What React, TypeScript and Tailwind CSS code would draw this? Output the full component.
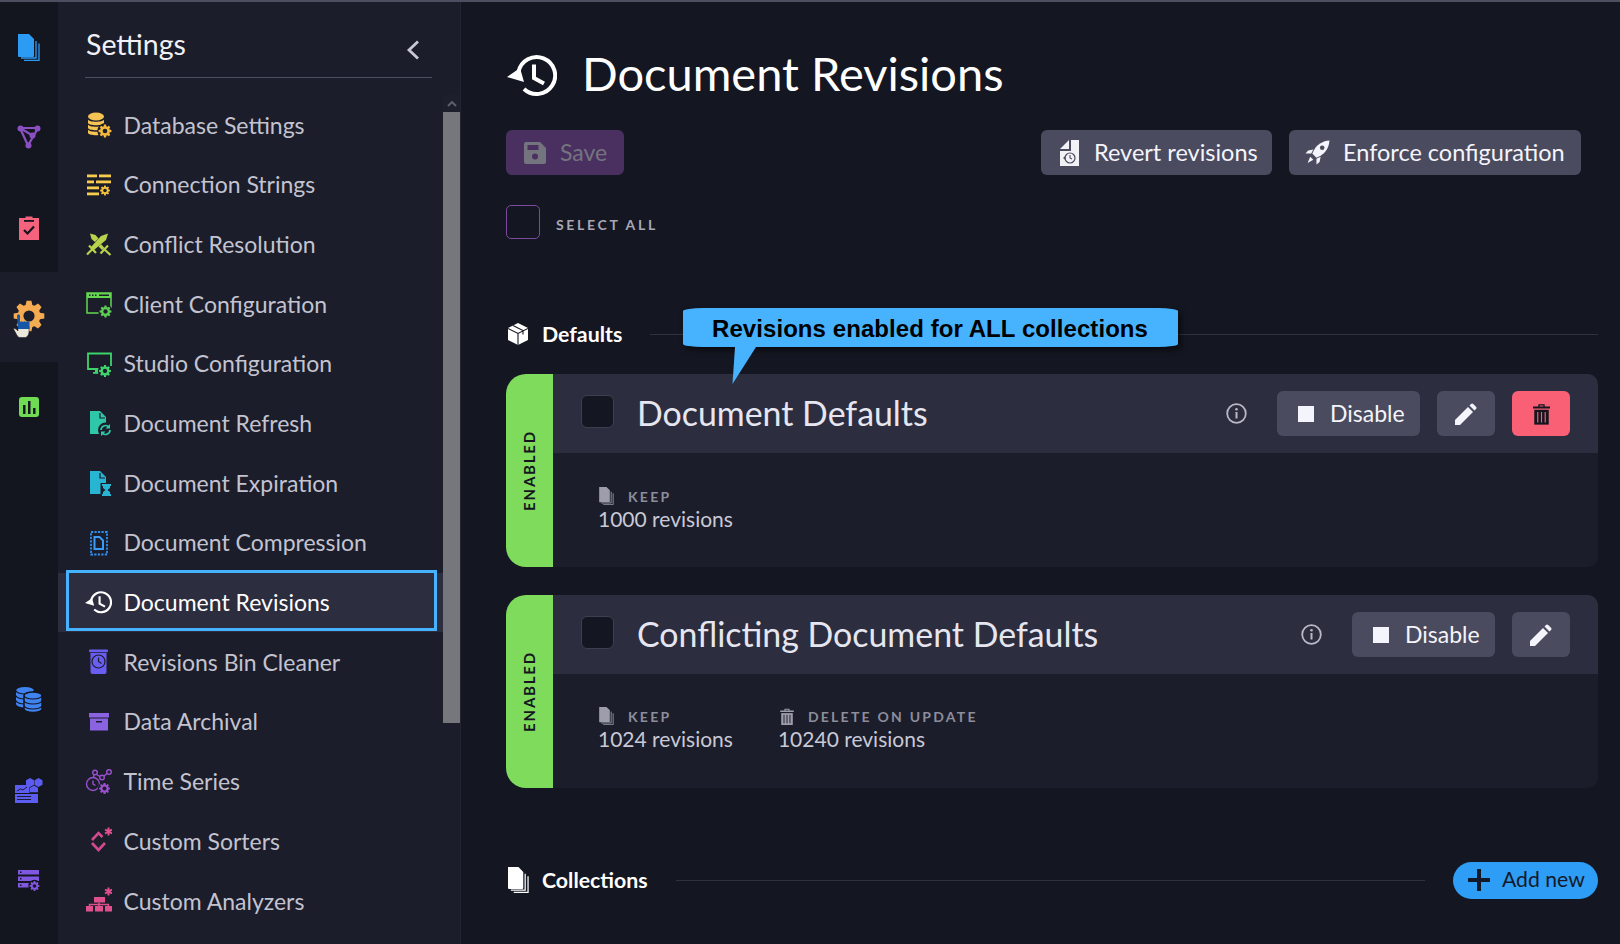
const BG = '#1b1d2a'

// gear outline as a polygon, teeth all round
function Gear({ cx, cy, r, fill, hole = BG, teeth = 8 }: { cx: number; cy: number; r: number; fill: string; hole?: string; teeth?: number }) {
  const pts: string[] = []
  const inner = r * 0.74
  for (let i = 0; i < teeth; i++) {
    const a = (i / teeth) * Math.PI * 2
    const w = (Math.PI * 2) / teeth
    const add = (rad: number, ang: number) => pts.push(`${(cx + rad * Math.cos(ang)).toFixed(2)},${(cy + rad * Math.sin(ang)).toFixed(2)}`)
    add(inner, a - w * 0.38)
    add(r, a - w * 0.2)
    add(r, a + w * 0.2)
    add(inner, a + w * 0.38)
  }
  return (
    <g>
      <circle cx={cx} cy={cy} r={r + 1.2} fill={hole} />
      <polygon points={pts.join(' ')} fill={fill} />
      <circle cx={cx} cy={cy} r={r * 0.36} fill={hole} />
    </g>
  )
}

const Svg = ({ children, w = 28, h = 28 }: { children: React.ReactNode; w?: number; h?: number }) => (
  <svg width={w} height={h} viewBox={`0 0 ${w} ${h}`} className="shrink-0">
    {children}
  </svg>
)

const DocBody = ({ fill }: { fill: string }) => (
  <>
    <path d="M6 2h10l6 6v17H6z" fill={fill} />
    <path d="M16 4v5h5" fill="none" stroke={BG} strokeWidth="1.200" />
  </>
)

// clock with a back arrow, used in the menu and the page title
const HistoryIcon = ({ w, h }: { w: number; h: number }) => (
  <svg width={w} height={h} viewBox="0 0 50 44" className="shrink-0">
    <path d="M11.500 19A18.500 18.500 0 1 1 17 36" fill="none" stroke="#fff" strokeWidth="4" />
    <path d="M0 24l13-9 4 14z" fill="#fff" />
    <path d="M27 11.500V25l10 5.500" fill="none" stroke="#fff" strokeWidth="4" />
  </svg>
)

const menuIcons: Record<string, React.ReactNode> = {
  db: (
    <Svg>
      <ellipse cx="12" cy="5.500" rx="8" ry="4" fill="#f6c453" />
      <path d="M4 8.500c1 3 15 3 16 0v3.500c-1 3-15 3-16 0z" fill="#f6c453" />
      <path d="M4 13.500c1 3 15 3 16 0V17c-1 3-15 3-16 0z" fill="#f6c453" />
      <path d="M4 18.500c1 3 15 3 16 0V22c-1 3-15 3-16 0z" fill="#f6c453" />
      <Gear cx={21} cy={20} r={6.500} fill="#f5b63c" />
    </Svg>
  ),
  conn: (
    <Svg>
      <g fill="#f7cb4b">
        <rect x="3" y="3.500" width="10" height="2.800" />
        <rect x="15" y="3.500" width="12" height="2.800" />
        <rect x="3" y="9.500" width="7" height="2.800" />
        <rect x="12" y="9.500" width="15" height="2.800" />
        <rect x="3" y="15.500" width="12" height="2.800" />
        <rect x="3" y="21.500" width="12" height="2.800" />
      </g>
      <Gear cx={21} cy={19.500} r={5} fill="#f5c03c" />
    </Svg>
  ),
  swords: (
    <Svg>
      <g fill="#b7d34c">
        <path d="M24 3.500l-2 6.500-12 10-3-3 10-11z" />
        <path d="M6 3.500l5.500 1.500 3 3.500-3.500 3.500-3.500-3z" />
        <path d="M17 14l3.500 4-2.500 2-3.500-3.500z" />
      </g>
      <g stroke="#b7d34c" strokeWidth="2.200" fill="none">
        <path d="M8 19.500L3 24.500M5 15.500l7 7.500" />
        <path d="M20 19l6.500 6M24 15.500l-7.500 8" />
      </g>
    </Svg>
  ),
  client: (
    <Svg>
      <rect x="3" y="3" width="24" height="20" fill="none" stroke="#63d84e" strokeWidth="1.500" />
      <rect x="3" y="3" width="24" height="5" fill="#63d84e" />
      <rect x="5" y="4.500" width="1.500" height="1.500" fill={BG} />
      <rect x="8" y="4.500" width="1.500" height="1.500" fill={BG} />
      <rect x="11" y="4.500" width="1.500" height="1.500" fill={BG} />
      <rect x="15" y="4.500" width="10" height="1.500" fill={BG} />
      <Gear cx={21.500} cy={21.500} r={6} fill="#5ecb55" />
    </Svg>
  ),
  studio: (
    <Svg>
      <path d="M18 19H4V3.500h23V16" fill="none" stroke="#3fd46b" strokeWidth="1.800" />
      <rect x="11" y="19" width="3" height="4" fill="#3fd46b" />
      <rect x="9" y="22" width="7" height="1.800" fill="#3fd46b" />
      <Gear cx={21} cy={21} r={6} fill="#3fd46b" />
    </Svg>
  ),
  refresh: (
    <Svg>
      <DocBody fill="#2fc7a7" />
      <circle cx="21.500" cy="21" r="7.500" fill={BG} />
      <path d="M17 21a4.500 4.500 0 0 1 7.500-3.300M26 21a4.500 4.500 0 0 1-7.500 3.300" fill="none" stroke="#2fc7a7" strokeWidth="1.700" />
      <path d="M26 15v4.500h-4.500zM17 27v-4.500h4.500z" fill="#2fc7a7" />
    </Svg>
  ),
  expire: (
    <Svg>
      <DocBody fill="#28b5d4" />
      <rect x="16.500" y="14" width="12" height="14" fill={BG} />
      <path d="M18 15h9v2h-1v2l-2.500 2 2.500 2v2h1v2h-9v-2h1v-2l2.500-2-2.500-2v-2h-1z" fill="#28b5d4" />
    </Svg>
  ),
  compress: (
    <Svg>
      <rect x="7" y="3" width="16" height="22.500" fill="none" stroke="#2f8ff0" strokeWidth="1.800" strokeDasharray="2.200 1.300" />
      <path d="M10.500 8h5l3.500 3.500V20h-8.500z" fill="none" stroke="#3a9bf5" strokeWidth="2" />
    </Svg>
  ),
  bin: (
    <Svg>
      <rect x="5" y="1.500" width="19" height="2.800" rx="1" fill="#6a5ef0" />
      <path d="M6.500 5h16v19a2 2 0 0 1-2 2h-12a2 2 0 0 1-2-2z" fill="#6a5ef0" />
      <circle cx="14.500" cy="13.500" r="6.500" fill="none" stroke={BG} strokeWidth="1.200" />
      <path d="M14.500 9.500v4l3 2" fill="none" stroke={BG} strokeWidth="1.200" />
    </Svg>
  ),
  archive: (
    <Svg>
      <rect x="5" y="5" width="20" height="4.500" fill="#8a63e0" />
      <rect x="6" y="10.500" width="18" height="12" fill="#8a63e0" />
      <rect x="12" y="13" width="6" height="1.500" fill={BG} />
    </Svg>
  ),
  series: (
    <Svg>
      <g fill="none" stroke="#9a4fcf" strokeWidth="1.400">
        <circle cx="9" cy="17" r="6.500" />
        <path d="M9 13.500V17l2.500 1.500" />
        <circle cx="11" cy="5.500" r="2.300" />
        <circle cx="18" cy="10.500" r="2.300" />
        <circle cx="25" cy="5" r="2.300" />
        <path d="M12.500 7.500l3.500 2M20 9l3-2.500M10 8l-.5 2.500" />
      </g>
      <Gear cx={20.500} cy={21.500} r={5.500} fill="#9a4fcf" />
    </Svg>
  ),
  sorters: (
    <Svg>
      <path d="M8 13l6.500-7 4 4" fill="none" stroke="#d14a8e" strokeWidth="2.600" />
      <path d="M8 16l6.500 7 6.500-7" fill="none" stroke="#d14a8e" strokeWidth="2.600" />
      <path d="M24.500 .5v8M21 2.500l7 4M28 2.500l-7 4" stroke="#e0508f" strokeWidth="2" />
    </Svg>
  ),
  analyzers: (
    <Svg>
      <path d="M24.500 .5v8M21 2.500l7 4M28 2.500l-7 4" stroke="#e0508f" strokeWidth="2" />
      <rect x="10" y="10" width="11" height="5.500" fill="#e0508f" />
      <path d="M15 15.500v4M5.500 19v-1.500h19V19" fill="none" stroke="#e0508f" strokeWidth="1.400" />
      <rect x="2" y="19" width="7" height="5.500" fill="#e0508f" />
      <rect x="11" y="19" width="8" height="5.500" fill="#e0508f" />
      <rect x="21" y="19" width="7" height="5.500" fill="#e0508f" />
    </Svg>
  ),
}

const menu: [string, React.ReactNode][] = [
  ['Database Settings', menuIcons.db],
  ['Connection Strings', menuIcons.conn],
  ['Conflict Resolution', menuIcons.swords],
  ['Client Configuration', menuIcons.client],
  ['Studio Configuration', menuIcons.studio],
  ['Document Refresh', menuIcons.refresh],
  ['Document Expiration', menuIcons.expire],
  ['Document Compression', menuIcons.compress],
  ['Document Revisions', <span key="h" className="w-[28px] flex justify-center"><HistoryIcon w={27} h={24} /></span>],
  ['Revisions Bin Cleaner', menuIcons.bin],
  ['Data Archival', menuIcons.archive],
  ['Time Series', menuIcons.series],
  ['Custom Sorters', menuIcons.sorters],
  ['Custom Analyzers', menuIcons.analyzers],
]

const PagesIcon = ({ fill, w, h }: { fill: string; w: number; h: number }) => (
  <svg width={w} height={h} viewBox="0 0 22 27" className="shrink-0">
    <path d="M0 0h11l5 5v17a1 1 0 0 1-1 1H1a1 1 0 0 1-1-1z" fill={fill} />
    <path d="M18 7v17H3M21 9.500V26.500H6" fill="none" stroke={fill} strokeWidth="1.300" />
  </svg>
)

function RailDocs() {
  return <PagesIcon fill="#2b9bf4" w={22} h={27} />
}

function RailGraph() {
  return (
    <Svg w={24} h={24}>
      <g fill="none" stroke="#8a4fc0" strokeWidth="2.200">
        <path d="M3 3h18L11 20.500z" />
        <path d="M3 3l12.500 7.500" />
      </g>
      <g fill="#8a4fc0">
        <circle cx="3.500" cy="3.500" r="3" />
        <circle cx="20.500" cy="3.500" r="3" />
        <circle cx="11.500" cy="20.500" r="3" />
        <circle cx="15.500" cy="10.500" r="3" />
      </g>
    </Svg>
  )
}

function RailTasks() {
  return (
    <Svg w={20} h={25}>
      <path d="M0 3h6.500V1.500h7V3H20v22H0z" fill="#f5627e" />
      <rect x="5" y="5" width="10" height="1.800" fill="#14151f" />
      <path d="M5 15l3.500 3.500L15 11.500" fill="none" stroke="#14151f" strokeWidth="2.200" />
    </Svg>
  )
}

function RailSettings() {
  return (
    <div className="relative w-[32px] h-[34px] -mt-[2px]">
      <Svg w={32} h={34}>
        <Gear cx={16} cy={17} r={15.500} fill="#f5ab52" hole="#1b1d2a" />
      </Svg>
      {/* mouse pointer sitting on the gear */}
      <svg width="18" height="24" viewBox="0 0 18 24" className="absolute left-0 top-[15px]">
        <path d="M.5 15c1-1 3 0 4.500 2V13h11v4c0 4-2 6.500-4 6.500H7c-2 0-3-2-4-4z" fill="#ece8dc" stroke="#14151f" strokeWidth=".5" />
        <path d="M4 1.500c0-1.500 3-1.500 3 0V8c1-1 2-1 3 0 1-1 2-1 3 0 1-1 3-1 3.500.5V15H5z" fill="#1456a8" />
      </svg>
    </div>
  )
}

function RailStats() {
  return (
    <Svg w={20} h={20}>
      <rect width="20" height="20" rx="3" fill="#6fdc54" />
      <rect x="4" y="8" width="2.500" height="9" fill="#14151f" />
      <rect x="9" y="4" width="2.500" height="13" fill="#14151f" />
      <rect x="14" y="11" width="2.500" height="6" fill="#14151f" />
    </Svg>
  )
}

function RailDatabases() {
  const can = (x: number, y: number, halo: boolean) => (
    <g transform={`translate(${x} ${y})`}>
      <path d="M0 3.500a9 3.500 0 0 1 18 0V17a9 3.500 0 0 1-18 0z" fill="#3f83f0" stroke={halo ? '#14151f' : 'none'} strokeWidth="1.500" />
      <path d="M0 3.500a9 3.500 0 0 0 18 0M0 8.500a9 3.500 0 0 0 18 0M0 13.500a9 3.500 0 0 0 18 0" fill="none" stroke="#14151f" strokeWidth="1.100" />
    </g>
  )
  return (
    <Svg w={28} h={28}>
      {can(1, 1, false)}
      {can(9, 6, true)}
    </Svg>
  )
}

function RailStorage() {
  return (
    <Svg w={28} h={25}>
      <path d="M15 0l4 2.300v4.500l-4 2.300-4-2.300V2.300z" fill="#5c5cf0" />
      <path d="M23.500 0l4 2.300v4.500l-4 2.300-4-2.300V2.300z" fill="#5c5cf0" />
      <path d="M19 7.500l4 2.300v4.500H15V9.800z" fill="#5c5cf0" />
      <rect x="0" y="7" width="14.500" height="8" fill="#5c5cf0" />
      <path d="M2 13l3.500-2 2.500 1 4-3" fill="none" stroke="#14151f" strokeWidth="0.900" />
      <rect x="0" y="16" width="23" height="9" fill="#5c5cf0" />
      <path d="M2 18.500h14M2 21.500h14" stroke="#14151f" strokeWidth="0.900" />
    </Svg>
  )
}

function RailServer() {
  return (
    <Svg w={22} h={21}>
      <g fill="#7f57e0">
        <rect x="0" y="0" width="21" height="4.500" />
        <rect x="0" y="6.500" width="21" height="4.500" />
        <rect x="0" y="13" width="14" height="4.500" />
      </g>
      <g fill="#14151f">
        <rect x="2" y="1.500" width="1.500" height="1.500" />
        <rect x="2" y="8" width="1.500" height="1.500" />
        <rect x="2" y="14.500" width="1.500" height="1.500" />
      </g>
      <Gear cx={16.500} cy={16} r={5} fill="#7f57e0" hole="#14151f" />
    </Svg>
  )
}

const TrashIcon = ({ fill, cut, w, h }: { fill: string; cut: string; w: number; h: number }) => (
  <svg width={w} height={h} viewBox="0 0 16 20" className="shrink-0">
    <path d="M5 3V.800h6V3h5v1.800H0V3zM6.200 2v1h3.600V2z" fill={fill} fillRule="evenodd" />
    <path d="M1.200 6h13.600v14H1.200z" fill={fill} />
    <path d="M4.500 8v10M8 8v10M11.500 8v10" stroke={cut} strokeWidth="1.100" />
  </svg>
)

const InfoIcon = () => (
  <svg width="21" height="21" viewBox="0 0 21 21" className="shrink-0">
    <circle cx="10.500" cy="10.500" r="9.300" fill="none" stroke="#b9b9c6" strokeWidth="1.800" />
    <circle cx="10.500" cy="6.300" r="1.300" fill="#b9b9c6" />
    <rect x="9.500" y="9" width="2" height="6.500" fill="#b9b9c6" />
  </svg>
)

const RevertIcon = () => (
  <svg width="19" height="26" viewBox="0 0 19 26" className="shrink-0">
    <path d="M11 0h8v26H0V11h11z" fill="#f2f2f6" />
    <path d="M0 9l9-9v9z" fill="#f2f2f6" />
    <circle cx="10" cy="18" r="5" fill="none" stroke="#4b4b5f" strokeWidth="1.200" />
    <path d="M10 15v3l2 1" fill="none" stroke="#4b4b5f" strokeWidth="1.100" />
    <path d="M3 18l2.500-2v4z" fill="#4b4b5f" />
  </svg>
)

const SaveIcon = () => (
  <svg width="22" height="22" viewBox="0 0 22 22" className="shrink-0">
    <path d="M0 2a2 2 0 0 1 2-2h14l6 6v14a2 2 0 0 1-2 2H2a2 2 0 0 1-2-2z" fill="#74747f" />
    <rect x="3.500" y="3" width="11" height="5" fill="#4a3060" />
    <circle cx="11" cy="14.500" r="3" fill="#4a3060" />
  </svg>
)

const RocketIcon = () => (
  <svg width="25" height="25" viewBox="0 0 24 24" className="shrink-0">
    <path d="M23.500.5C17 1 12 4 9 9l-2 4 4 4 4-2c5-3 8-8 8.500-14.500z" fill="#f4f4fc" />
    <circle cx="16.500" cy="7.500" r="2.200" fill="#4b4b5f" />
    <path d="M8 9L3 10l-2.500 3H6zM15 16l-1 5-3 2.500V18zM5 16l3 3-5.500 3z" fill="#f4f4fc" />
  </svg>
)

const PencilIcon = () => (
  <svg width="22" height="22" viewBox="0 0 22 22" className="shrink-0">
    <path d="M0 22v-5L13 4l5 5L5 22z" fill="#f4f4fc" />
    <path d="M14.500 2.500L16 1c.7-.7 1.500-.7 2.200 0l2.800 2.800c.7.7.7 1.500 0 2.200l-1.500 1.500z" fill="#f4f4fc" />
  </svg>
)

const CubeIcon = () => (
  <svg width="20" height="22" viewBox="0 0 20 22" className="shrink-0">
    <path d="M10 0l10 5v12l-10 5-10-5V5z" fill="#fff" />
    <path d="M0 5.500l10 5 10-5M10 10.500V22M5 2.500l10 5v4" fill="none" stroke="#141621" strokeWidth="1.100" />
  </svg>
)

function Button({ className, children }: { className: string; children: React.ReactNode }) {
  return <div className={`flex items-center h-[45px] rounded-[6px] bg-[#4b4b5f] text-[#f4f4fa] ${className}`}>{children}</div>
}

function Stat({ icon, label, value, gap }: { icon: React.ReactNode; label: string; value: string; gap: string }) {
  return (
    <div>
      <div className={`flex items-center h-[20px] ${gap}`}>
        {icon}
        <span className="text-[14px] font-bold tracking-[0.16em] text-[#8d8d9c]">{label}</span>
      </div>
      <div className="text-[21px] leading-[26px] text-[#c9c9d6]">{value}</div>
    </div>
  )
}

function Card({ title, className, bodyClass, actions, children }: { title: string; className: string; bodyClass: string; actions: React.ReactNode; children: React.ReactNode }) {
  return (
    <div className={`flex ${className}`}>
      <div className="w-[47px] shrink-0 rounded-l-[20px] bg-[#7edb5c] flex items-center justify-center">
        <span className="[writing-mode:vertical-rl] rotate-180 text-[15px] font-bold tracking-[0.12em] text-[#14151f]">ENABLED</span>
      </div>
      <div className="flex-1 flex flex-col">
        <div className="h-[79px] rounded-tr-[10px] bg-[#2c2d3f] flex items-center pl-[28px] pr-[28px]">
          <div className="w-[33px] h-[33px] -mt-[5px] rounded-[6px] border border-[#3d3e50] bg-[#141621]" />
          <div className="ml-[23px] text-[33.9px] text-[#e6e6f0]">{title}</div>
          <div className="ml-auto flex items-center">{actions}</div>
        </div>
        <div className={`flex-1 rounded-br-[10px] bg-[#1b1d2a] pl-[45px] flex gap-[45px] ${bodyClass}`}>{children}</div>
      </div>
    </div>
  )
}

const KeepIcon = () => <span className="ml-[1px]"><PagesIcon fill="#9d9dac" w={15} h={18} /></span>

const DisableBtn = ({ w }: { w: string }) => (
  <Button className={`${w} pl-[21px] text-[23px]`}>
    <span className="w-[16px] h-[16px] bg-[#f4f4fc]" />
    <span className="ml-[16px]">Disable</span>
  </Button>
)

const PenBtn = () => (
  <Button className="w-[58px] justify-center ml-[17px]">
    <PencilIcon />
  </Button>
)

export default function App() {
  return (
    <div className="w-[1620px] h-[944px] overflow-hidden flex flex-col bg-[#141621] font-['Lato','Inter',sans-serif]">
      <div className="h-[2px] bg-[#4d4e60]" />
      <div className="flex-1 flex min-h-0">
        {/* icon rail */}
        <div className="w-[58px] shrink-0 flex flex-col pb-[19px] bg-[#13151f]">
          <div className="h-[90px] flex items-center justify-center"><RailDocs /></div>
          <div className="h-[90px] flex items-center justify-center"><RailGraph /></div>
          <div className="h-[90px] flex items-center justify-center"><RailTasks /></div>
          <div className="h-[90px] flex items-center justify-center bg-[#1b1d2a]"><RailSettings /></div>
          <div className="h-[90px] flex items-center justify-center"><RailStats /></div>
          <div className="flex-1" />
          <div className="h-[90px] flex items-center justify-center"><RailDatabases /></div>
          <div className="h-[90px] flex items-center justify-center"><RailStorage /></div>
          <div className="h-[90px] flex items-center justify-center"><RailServer /></div>
        </div>

        {/* settings panel */}
        <div className="w-[402px] shrink-0 flex flex-col bg-[#1b1d2a]">
          <div className="h-[76px] ml-[27px] mr-[28px] border-b border-[#4d4e60] flex items-start justify-between">
            <div className="pl-[1px] pt-[23px] text-[28.5px] leading-[38px] text-[#f0f0f6]">Settings</div>
            <svg width="14" height="20" viewBox="0 0 14 20" className="mt-[38px] mr-[12px]">
              <path d="M12 1.500L3 10l9 8.500" fill="none" stroke="#c9c9d6" strokeWidth="2.800" />
            </svg>
          </div>
          <div className="flex-1 mt-[17px] flex min-h-0">
            <div className="flex-1">
              {menu.map(([label, icon], i) => {
                const active = label === 'Document Revisions'
                return (
                  <div
                    key={i}
                    className={`relative h-[59.7px] flex items-center pl-[26px] gap-[11.5px] text-[23px] ${active ? 'bg-[#2c2d3f] text-white' : 'text-[#c3c3d0]'}`}
                  >
                    {icon}
                    <span>{label}</span>
                    {active && <div className="absolute left-[8px] right-[6px] top-[-3px] bottom-[1px] border-[3px] border-[#45b3ff]" />}
                  </div>
                )
              })}
            </div>
            <div className="w-[17px] flex flex-col">
              <div className="h-[17px] bg-[#1d1f2c] flex items-center justify-center">
                <svg width="10" height="6" viewBox="0 0 10 6">
                  <path d="M1 5l4-4 4 4" fill="none" stroke="#5e5f6c" strokeWidth="2" />
                </svg>
              </div>
              <div className="h-[611px] bg-[#76767d]" />
            </div>
          </div>
        </div>

        {/* main content */}
        <div className="flex-1 border-l border-[#22242f] pl-[45px] pr-[22px] pt-[48px] text-white">
          <div className="h-[50px] flex items-center">
            <span className="ml-[1px] mr-[25px]"><HistoryIcon w={50} h={44} /></span>
            <h1 className="text-[47px] -mt-[3px]">Document Revisions</h1>
          </div>

          <div className="mt-[30px] h-[45px] flex justify-between pr-[17px]">
            <div className="w-[118px] h-[45px] rounded-[6px] bg-[#4a3060] flex items-center pl-[18px] text-[23px] text-[#74747f]">
              <SaveIcon />
              <span className="ml-[14px]">Save</span>
            </div>
            <div className="flex gap-[17px]">
              <Button className="w-[231px] pl-[19px] text-[23.5px]">
                <RevertIcon />
                <span className="ml-[15px]">Revert revisions</span>
              </Button>
              <Button className="w-[292px] pl-[16px] text-[23.5px]">
                <RocketIcon />
                <span className="ml-[13px]">Enforce configuration</span>
              </Button>
            </div>
          </div>

          <div className="mt-[30px] h-[34px] flex items-center">
            <div className="w-[34px] h-[34px] rounded-[5px] border border-[#7a4a9e]" />
            <span className="ml-[16px] mt-[5px] text-[14px] font-bold tracking-[0.19em] text-[#a8a8b5]">SELECT ALL</span>
          </div>

          <div className="relative mt-[80px] h-[30px] flex items-center">
            <span className="ml-[2px]"><CubeIcon /></span>
            <span className="ml-[14px] mt-[1px] text-[21.3px] font-bold">Defaults</span>
            <div className="ml-[28px] flex-1 h-px bg-[#2f3140]" />
            {/* annotation callout on top of the heading */}
            <div className="absolute left-[177px] top-[-11px] w-[495px] h-[39px] rounded-[20px/3px] bg-[#47b3ff] shadow-[3px_3px_6px_rgba(0,0,0,0.55)] flex items-center pl-[29px] pt-[2px] font-['Liberation_Sans',sans-serif] text-[24px] font-bold tracking-[0.07px] text-black">
              Revisions enabled for ALL collections
            </div>
            <svg width="30" height="40" viewBox="0 0 30 40" className="absolute left-[226px] top-[27px] z-10">
              <path d="M3 1h21L0.500 38z" fill="#47b3ff" />
            </svg>
          </div>

          <Card
            title="Document Defaults"
            className="mt-[25px] h-[193px]"
            bodyClass="pt-[33px]"
            actions={
              <>
                <InfoIcon />
                <div className="ml-[30px]"><DisableBtn w="w-[143px]" /></div>
                <PenBtn />
                <div className="w-[58px] h-[45px] ml-[17px] rounded-[6px] bg-[#f95f75] flex items-center justify-center">
                  <TrashIcon fill="#14151f" cut="#f95f75" w={17} h={22} />
                </div>
              </>
            }
          >
            <Stat icon={<KeepIcon />} label="KEEP" value="1000 revisions" gap="gap-[14px]" />
          </Card>

          <Card
            title="Conflicting Document Defaults"
            className="mt-[28px] h-[193px]"
            bodyClass="pt-[32px]"
            actions={
              <>
                <InfoIcon />
                <div className="ml-[30px]"><DisableBtn w="w-[143px]" /></div>
                <PenBtn />
              </>
            }
          >
            <Stat icon={<KeepIcon />} label="KEEP" value="1024 revisions" gap="gap-[14px]" />
            <Stat icon={<TrashIcon fill="#9d9dac" cut="#1b1d2a" w={14} h={17} />} label="DELETE ON UPDATE" value="10240 revisions" gap="gap-[14px] pl-[2px]" />
          </Card>

          <div className="mt-[72px] h-[40px] flex items-center">
            <span className="ml-[2px]"><PagesIcon fill="#fff" w={21} h={26} /></span>
            <span className="ml-[13px] mt-[2px] text-[21.3px] font-bold">Collections</span>
            <div className="ml-[28px] flex-1 h-px bg-[#2f3140]" />
            <div className="ml-[28px] w-[145px] h-[37px] rounded-full bg-[#2e9df5] flex items-center pl-[15px] text-[21.2px] text-[#14192a]">
              <svg width="22" height="22" viewBox="0 0 22 22" className="shrink-0">
                <path d="M11 0v22M0 11h22" stroke="#14192a" strokeWidth="4" />
              </svg>
              <span className="ml-[12px]">Add new</span>
            </div>
          </div>
        </div>
      </div>
    </div>
  )
}
